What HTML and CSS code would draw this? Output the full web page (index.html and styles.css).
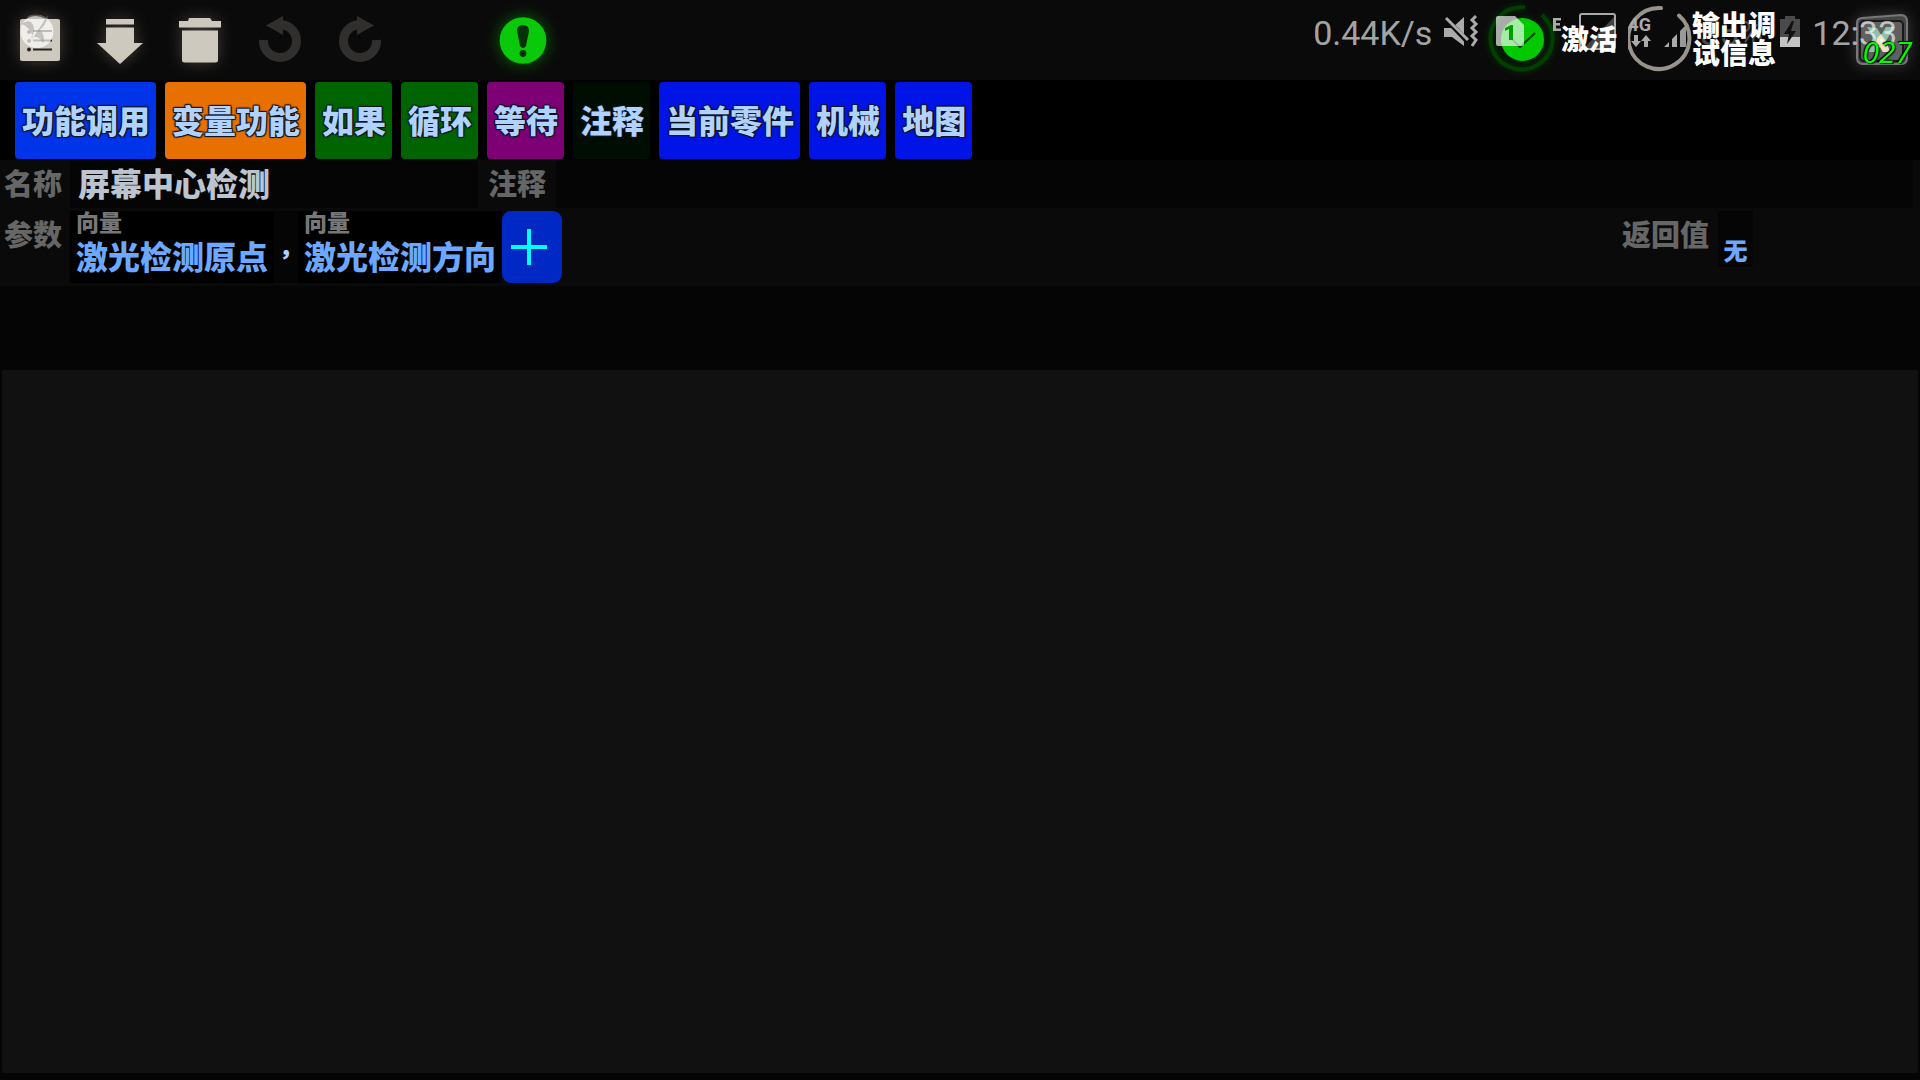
FILE: index.html
```html
<!DOCTYPE html>
<html lang="zh-CN">
<head>
    <meta charset="UTF-8">
    <meta name="viewport" content="width=device-width, initial-scale=1.0">
    <title>屏幕中心检测</title>
    <link rel="stylesheet" href="styles.css">
</head>
<body>
    <header class="toolbar">
        <button type="button" class="tool" aria-label="列表">
            <svg viewBox="0 0 80 80">
                <rect x="20" y="19" width="40" height="42" rx="2" fill="#cdc9bf"/>
                <g stroke="#2b2220" stroke-width="2">
                    <path d="M33 31H52M33 40.500H52M33 49.500H52"/>
                </g>
                <g fill="#2b2220"><circle cx="29" cy="32" r="2"/><circle cx="29" cy="41" r="2"/><circle cx="29" cy="49.500" r="2"/></g>
                <circle cx="37" cy="31.500" r="16.500" fill="#fff" opacity=".7"/>
                <path d="M22 24Q31 28 33 38L29 44Q38 30 48 15Q47 24 40 30Q46 36 43 43Q38 34 31 38Q37 29 31 22Q26 20 22 24Z" fill="#9b958d" opacity=".5"/>
                <path d="M28 17Q36 13 46 18" fill="none" stroke="#555" stroke-width="1.500"/>
            </svg>
        </button>
        <button type="button" class="tool" aria-label="下载">
            <svg viewBox="0 0 80 80" fill="#cdc9bf">
                <path d="M26 19H54V24.500H26ZM26 27.500H54V43H63L40 64L17 43H26Z"/>
            </svg>
        </button>
        <button type="button" class="tool" aria-label="删除">
            <svg viewBox="0 0 80 80" fill="#cdc9bf">
                <path d="M29 18H50L52 21H61V27.500H19V21H28ZM22 30.500H58V60Q58 62.500 55.500 62.500H24.500Q22 62.500 22 60Z"/>
            </svg>
        </button>
        <button type="button" class="tool off" aria-label="撤销" disabled>
            <svg viewBox="0 0 80 80">
                <path d="M23.500 40A16.500 16.500 0 1 0 40 24.500" fill="none" stroke="#302f2d" stroke-width="9"/>
                <path d="M26 25.500L43 16V35Z" fill="#302f2d"/>
            </svg>
        </button>
        <button type="button" class="tool off" aria-label="重做" disabled>
            <svg viewBox="0 0 80 80">
                <path d="M56.500 40A16.500 16.500 0 1 1 40 24.500" fill="none" stroke="#302f2d" stroke-width="9"/>
                <path d="M54 25.500L37 16V35Z" fill="#302f2d"/>
            </svg>
        </button>
        <button type="button" class="tool alert" aria-label="提示">
            <svg viewBox="0 0 80 80">
                <circle cx="43" cy="40.500" r="23.300" fill="#0ac80a"/>
                <path d="M37 31Q37 25 43 25Q49 25 49 31L46 46Q43 50 40 46Z" fill="#063306"/>
                <circle cx="43" cy="53.500" r="3.400" fill="#063306"/>
            </svg>
        </button>

        <div class="tool-right">
            <button type="button" class="action">
                <svg class="ring green" viewBox="0 0 68 80">
                    <path d="M37 7.500A31 31 0 1 0 54 15" fill="none" stroke="#003f00" stroke-width="4"/>
                    <circle cx="34.500" cy="39.500" r="21.500" fill="#02c902"/>
                    <path d="M24 39L32 47L47 33" fill="none" stroke="#06400a" stroke-width="2"/>
                </svg>
                <span class="action-label">激活</span>
            </button>
            <button type="button" class="action debug">
                <svg class="ring" viewBox="0 0 64 80">
                    <path d="M33 8A30.500 30.500 0 1 0 51 15.500" fill="none" stroke="#98948c" stroke-width="4" stroke-linecap="round"/>
                </svg>
                <span class="action-label">输出调<br>试信息</span>
            </button>
            <button type="button" class="app" aria-label="应用">
                <svg viewBox="0 0 80 80">
                    <path d="M22 18L61 15Q67 15 67 22V58Q67 64 61 64H23Q17 64 17 58V23Q17 18 22 18Z" fill="#454545" stroke="#777" stroke-width="2"/>
                    <rect x="20" y="21" width="43" height="40" rx="4" fill="#606060" stroke="#1a1a1a" stroke-width="2"/>
                    <path d="M27 27L37 28L41 35L46 27H54L46 41L50 52H43L40 47L34 52H28L35 40Z" fill="#8fc0ac"/>
                    <path d="M37 38L41 34L46 41L50 52H43L40 47L34 52Z" fill="#f2e3bf"/>
                </svg>
                <span class="counter">027</span>
            </button>
        </div>
    </header>

    <!-- phone status bar, drawn over the toolbar -->
    <div class="status">
        <span class="status-text">0.44K/s</span>
        <svg width="36" height="56" viewBox="0 0 36 56">
            <path d="M0 28H8L20 17V46L8 37H0Z" fill="#aaa"/>
            <path d="M2 19L24 42" stroke="#0a0a0a" stroke-width="5"/>
            <path d="M2 18L24 40" stroke="#aaa" stroke-width="3"/>
            <path d="M32 16L28 20L32 24L28 28L32 32L28 36L32 40L28 46" fill="none" stroke="#aaa" stroke-width="3"/>
        </svg>
        <svg width="36" height="56" viewBox="0 0 36 56">
            <path d="M6 16H23L32 25V44Q32 46 30 46H6Q4 46 4 44V18Q4 16 6 16Z" fill="#fff" opacity=".65"/>
            <path d="M13 28L19 25H21V40H17V29L13 31Z" fill="#009c00"/>
        </svg>
        <svg width="76" height="56" viewBox="0 0 76 56">
            <path d="M13 18H21V20.500H16V23H20V25.500H16V28.500H21V31H13Z" fill="#aaa"/>
            <rect x="40" y="14" width="35" height="35" rx="2" fill="none" stroke="#aaa" stroke-width="2"/>
            <path d="M74 17V48H44Z" fill="#444"/>
        </svg>
        <span class="network">4G<svg width="24" height="12" viewBox="0 0 24 12">
            <path d="M6 0H10V6H13L8 12L3 6H6ZM16 12V6H13L18 0L23 6H20V12Z" fill="#aaa"/>
        </svg></span>
        <svg width="24" height="56" viewBox="0 0 24 56">
            <path d="M0 47L5 42V47ZM8 39L13 34V47H8Z" fill="#aaa"/>
            <path d="M16 31L22 25V47H16Z" fill="#999"/>
        </svg>
        <span class="status-text percent">35%</span>
        <svg width="20" height="56" viewBox="0 0 20 56">
            <path d="M5 16H15V19H20V47H0V19H5Z" fill="#4a4a4a"/>
            <path d="M0 37H20V47H0Z" fill="#c4c4c4"/>
            <path d="M12 21L4 34H9L7 44L16 31H11L14 21Z" fill="#111"/>
        </svg>
        <span class="status-text">12:33</span>
    </div>

    <nav class="blocks">
        <button type="button" class="block call">功能调用</button>
        <button type="button" class="block variable">变量功能</button>
        <button type="button" class="block flow">如果</button>
        <button type="button" class="block flow">循环</button>
        <button type="button" class="block wait">等待</button>
        <button type="button" class="block note">注释</button>
        <button type="button" class="block part">当前零件</button>
        <button type="button" class="block part">机械</button>
        <button type="button" class="block part">地图</button>
    </nav>

    <div class="row name-row">
        <label class="row-label" for="func-name">名称</label>
        <input class="name-input" type="text" id="func-name" value="屏幕中心检测">
        <label class="row-label note-label" for="func-note">注释</label>
        <input class="note-input" type="text" id="func-note">
    </div>

    <div class="row param-row">
        <span class="row-label">参数</span>
        <button type="button" class="param">
            <span class="param-type">向量</span>
            <span class="param-name">激光检测原点</span>
        </button>
        <span class="comma" lang="zh-TW">，</span>
        <button type="button" class="param">
            <span class="param-type">向量</span>
            <span class="param-name">激光检测方向</span>
        </button>
        <button type="button" class="add" aria-label="添加参数">
            <svg width="36" height="36" viewBox="0 0 36 36">
                <path d="M18 0V36M0 18H36" stroke="#0ff" stroke-width="4"/>
            </svg>
        </button>
        <div class="result">
            <span class="row-label">返回值</span>
            <button type="button" class="result-type">无</button>
        </div>
    </div>

    <main class="canvas"></main>
</body>
</html>
```

FILE: styles.css
```css
* {
    box-sizing: border-box;
}

body {
    display: flex;
    flex-direction: column;
    min-height: 100vh;
    margin: 0;
    background: #050505;
    color: #fff;
    font-family: "Noto Sans CJK SC", sans-serif;
    font-weight: 900;
}

button, input {
    margin: 0;
    padding: 0;
    border: none;
    background: none;
    color: inherit;
    font: inherit;
}

button {
    cursor: pointer;
}

svg {
    display: block;
}

/* toolbar */
.toolbar {
    display: flex;
    height: 80px;
    background: #0a0a0a;
}

.tool, .app {
    width: 80px;
    height: 80px;
}

.tool svg {
    filter: drop-shadow(0 0 8px rgba(205, 180, 160, 0.3));
}

.tool.off svg {
    filter: none;
}

.alert {
    margin-left: 80px;
}

.tool.alert svg {
    filter: drop-shadow(0 0 8px rgba(10, 200, 10, 0.5));
}

.tool-right {
    display: flex;
    margin-left: auto;
}

.action {
    display: flex;
    align-items: center;
    gap: 5px;
    margin-right: 11px;
}

.action.debug {
    gap: 0;
    margin-right: 64px;
}

.ring {
    height: 80px;
}

.ring.green {
    filter: drop-shadow(0 0 3px #003a00);
}

.action-label {
    position: relative;
    z-index: 2;
    padding-bottom: 4px;
    font-size: 28px;
    line-height: 28px;
}

.app {
    position: relative;
}

.app svg {
    filter: drop-shadow(0 0 8px rgba(255, 255, 255, 0.2));
}

.counter {
    position: absolute;
    right: 8px;
    bottom: 12px;
    z-index: 2;
    color: #0f0;
    font: italic 500 30px/32px "Open Sans", sans-serif;
    text-shadow: 1px 1px 1px #000, -1px -1px 1px #000;
}

/* phone status */
.status {
    position: absolute;
    top: 0;
    right: 23px;
    z-index: 1;
    display: flex;
    align-items: center;
    gap: 12px;
    height: 56px;
    pointer-events: none;
}

.status-text {
    padding-top: 10px;
    color: rgba(255, 255, 255, 0.65);
    font: 400 34px/56px Roboto, sans-serif;
}

.percent {
    width: 68px;
    opacity: 0.4;
}

.network {
    width: 24px;
    padding-top: 6px;
    color: #aaa;
    font: 700 18px/20px Roboto, sans-serif;
}

/* block buttons */
.blocks {
    display: flex;
    gap: 9px;
    padding: 2px 15px 1px;
    background: #000;
}

.block {
    height: 77px;
    padding: 0 6px 4px 7px;
    border-radius: 4px;
    color: #b0d2fc;
    font-size: 32px;
    text-shadow: 1px 1px 1px #0a1420, -1px -1px 1px #0a1420, 1px -1px 1px #0a1420, -1px 1px 1px #0a1420;
}

.call {
    background: #0034e8;
}

.variable {
    background: #e87000;
}

.flow {
    background: #006400;
}

.wait {
    background: #7d0074;
}

.note {
    background: #000d03;
}

.part {
    background: #0014e8;
}

/* name and parameters */
.row {
    display: flex;
    background: #0a0a0a;
}

.row-label {
    width: 70px;
    padding-left: 4px;
    color: #666;
    font-size: 29px;
    line-height: 44px;
}

.name-row {
    padding-right: 7px;
}

.name-input {
    width: 408px;
    height: 48px;
    padding: 0 0 4px 8px;
    background: #050505;
    color: #bcc4d0;
    font-size: 32px;
}

.note-label {
    width: 78px;
    padding-left: 10px;
}

.note-input {
    flex: 1;
    background: #050505;
}

.param-row {
    align-items: flex-start;
    padding: 3px 0;
}

.param {
    height: 72px;
    padding: 0 6px 4px;
    background: #000;
    text-align: left;
}

.param-type, .param-name {
    display: block;
}

.param-type {
    color: #777;
    font-size: 23px;
    line-height: 20px;
}

.param-name {
    color: #6ca8ff;
    font-size: 32px;
    line-height: 48px;
}

.comma {
    width: 24px;
    height: 72px;
    background: #050505;
    color: #b0d2fc;
    font-family: "Noto Sans CJK TC", sans-serif;
    font-size: 24px;
    line-height: 84px;
}

.add {
    display: flex;
    align-items: center;
    justify-content: center;
    width: 60px;
    height: 72px;
    padding-right: 6px;
    border-radius: 9px;
    background: #0028c4;
}

.result {
    display: flex;
    align-items: flex-start;
    margin-left: auto;
    margin-right: 167px;
}

.result .row-label {
    width: 100px;
}

.result-type {
    width: 35px;
    height: 56px;
    padding-top: 22px;
    background: #050505;
    color: #6ca8ff;
    font-size: 24px;
    line-height: 34px;
}

/* work area */
.canvas {
    flex: 1;
    margin: 84px 2px 7px;
    border-radius: 2px;
    background: #111;
}
```
